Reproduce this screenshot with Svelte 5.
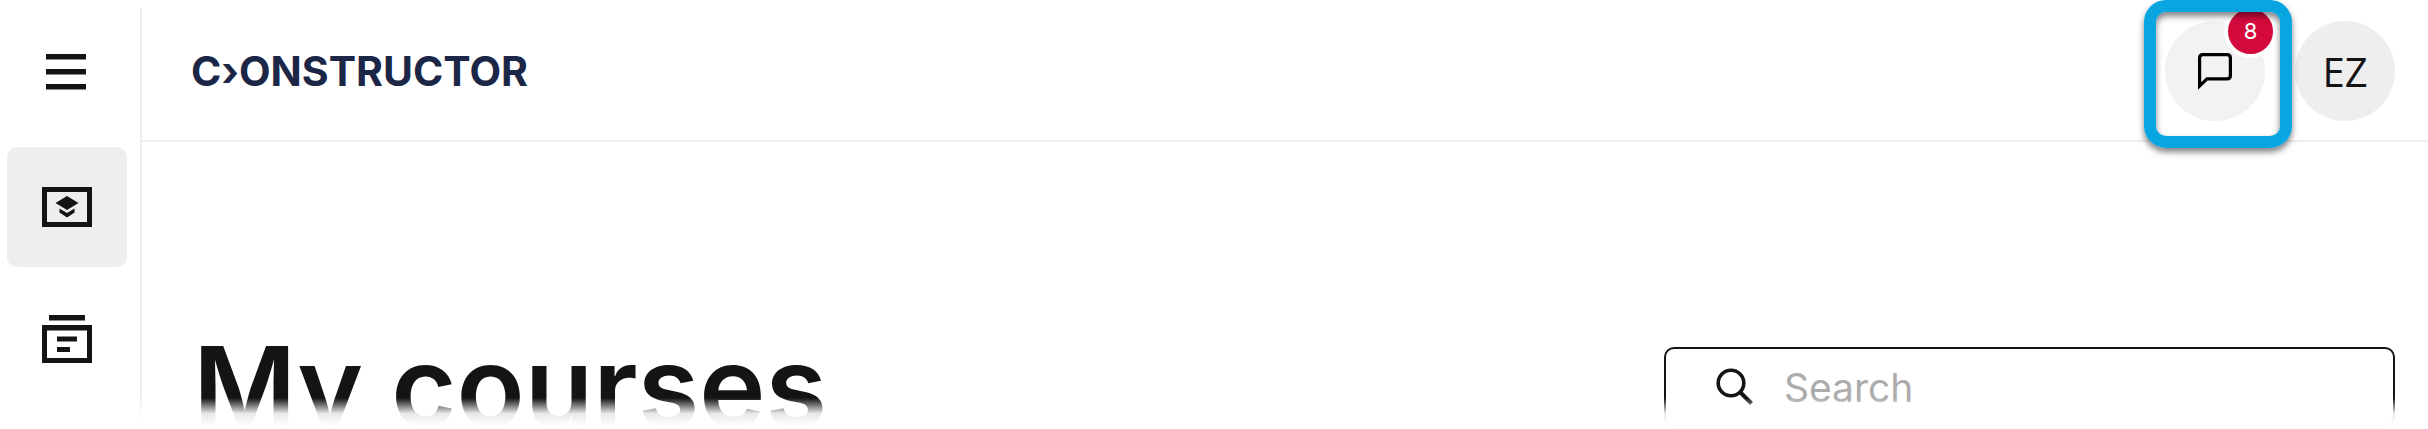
<script lang="ts">
  let query = $state('');
  const unread = 8;
  const initials = 'EZ';
</script>

<div class="app">
  <nav class="sidebar" aria-label="Main">
    <button class="nav-item menu" type="button" aria-label="Menu">
      <svg width="40" height="36" viewBox="0 0 40 36" fill="#141414">
        <path d="M0 0h40v5.5H0zM0 15h40v5.5H0zM0 30h40v5.5H0z" />
      </svg>
    </button>
    <a class="nav-item active" href="#courses" aria-label="My courses">
      <svg width="50" height="40" viewBox="0 0 50 40" fill="#141414">
        <path fill-rule="evenodd" d="M0 0h50v40H0zM5 5v30h40V5z" />
        <path d="M25 9l11.5 7L25 23l-11.5-7z" />
        <path d="M17.5 21.5l7.5 4.5 7.5-4.5v4L25 30.5l-7.5-5z" />
      </svg>
    </a>
    <a class="nav-item" href="#catalog" aria-label="Catalog">
      <svg width="50" height="48" viewBox="0 0 50 48" fill="#141414">
        <path d="M7 0h36v5.5H7z" />
        <path fill-rule="evenodd" d="M0 10h50v38H0zM5 15.5V43h40V15.5z" />
        <path d="M15 21.5h20v5H15zM15 32h13v5H15z" />
      </svg>
    </a>
  </nav>

  <div class="content">
    <header class="topbar">
      <a class="logo" href="#home">C›ONSTRUCTOR</a>
      <div class="actions">
        <div class="chat">
          <button class="round" type="button" aria-label="Messages">
            <svg width="34" height="37" viewBox="0 0 34 37" fill="none" stroke="#000" stroke-width="3.2">
              <path d="M1.6 33V5q0-3.4 3.4-3.4h24q3.4 0 3.4 3.4v17.5q0 3.4-3.4 3.4H9z" />
            </svg>
          </button>
          <span class="badge">{unread}</span>
          <span class="highlight"></span>
        </div>
        <button class="round avatar" type="button">{initials}</button>
      </div>
    </header>

    <main class="courses">
      <h1>My courses</h1>
      <label class="search">
        <svg width="38" height="38" viewBox="0 0 38 38" fill="none" stroke="#141414" stroke-width="3.6">
          <circle cx="15" cy="15" r="12.8" />
          <path d="M24 24l11.5 11.5" stroke-width="4" />
        </svg>
        <input type="search" placeholder="Search" aria-label="Search" bind:value={query} />
      </label>
    </main>
  </div>

  <div class="fade"></div>
</div>

<style>
  :global(body) {
    margin: 0;
    background: #fff;
  }

  .app {
    position: relative;
    display: flex;
    box-sizing: border-box;
    height: 100vh;
    padding-top: 8px;
    overflow: hidden;
    font-family: Inter, "Liberation Sans", sans-serif;
    color: #141414;
  }

  .sidebar {
    display: flex;
    flex-direction: column;
    flex: none;
    gap: 12px;
    padding: 7px 13px 0 7px;
    border-right: 2px solid #eee;
  }

  .nav-item {
    display: flex;
    align-items: center;
    justify-content: center;
    box-sizing: border-box;
    width: 120px;
    height: 120px;
    padding: 0;
    border: 0;
    border-radius: 10px;
    background: none;
  }

  .nav-item.menu {
    padding: 0 2px 6px 0;
  }

  .nav-item.active {
    background: #eee;
  }

  .content {
    flex: 1;
    min-width: 0;
  }

  .topbar {
    display: flex;
    align-items: center;
    justify-content: space-between;
    box-sizing: border-box;
    height: 134px;
    padding: 0 33px 6px 49px;
    border-bottom: 2px solid #eee;
  }

  .logo {
    color: #1c2748;
    font-size: 41px;
    font-weight: 700;
    text-decoration: none;
  }

  .actions {
    display: flex;
    gap: 30px;
  }

  .chat {
    position: relative;
  }

  .round {
    display: flex;
    align-items: center;
    justify-content: center;
    width: 100px;
    height: 100px;
    padding: 0;
    border: 0;
    border-radius: 50%;
    background: #f2f2f2;
    color: #141414;
  }

  .avatar {
    background: #eee;
    font-family: "Open Sans", sans-serif;
    font-size: 40px;
  }

  .badge {
    position: absolute;
    top: -16px;
    right: -12px;
    width: 45px;
    height: 45px;
    border: 4px solid #fff;
    border-radius: 50%;
    background: #d40a3c;
    color: #fff;
    font-size: 22px;
    line-height: 45px;
    text-align: center;
  }

  .highlight {
    position: absolute;
    inset: -21px -27px -27px -21px;
    border: 12px solid #08a5e0;
    border-radius: 22px;
    box-shadow: 0 4px 6px rgba(0, 0, 0, 0.5), inset 0 4px 6px rgba(0, 0, 0, 0.5);
    pointer-events: none;
  }

  .courses {
    display: flex;
    align-items: flex-start;
    justify-content: space-between;
    padding: 174px 33px 0 51px;
  }

  h1 {
    margin: 0;
    font-size: 112px;
    font-weight: 600;
    line-height: 140px;
    white-space: nowrap;
  }

  .search {
    display: flex;
    align-items: center;
    gap: 30px;
    box-sizing: border-box;
    width: 33.2%;
    height: 80px;
    margin-top: 31px;
    padding: 0 50px;
    border: 2px solid #141414;
    border-radius: 10px;
  }

  .search svg {
    flex: none;
  }

  .search input {
    flex: 1;
    min-width: 0;
    padding: 0;
    border: 0;
    outline: 0;
    background: none;
    font: inherit;
    font-size: 39px;
    color: #141414;
  }

  .search input::placeholder {
    color: #acacac;
    opacity: 1;
  }

  .fade {
    position: absolute;
    right: 0;
    bottom: 0;
    left: 0;
    height: 31px;
    background: linear-gradient(rgba(255, 255, 255, 0), rgba(255, 255, 255, 0.9) 50%, #fff 90%);
    pointer-events: none;
  }
</style>
